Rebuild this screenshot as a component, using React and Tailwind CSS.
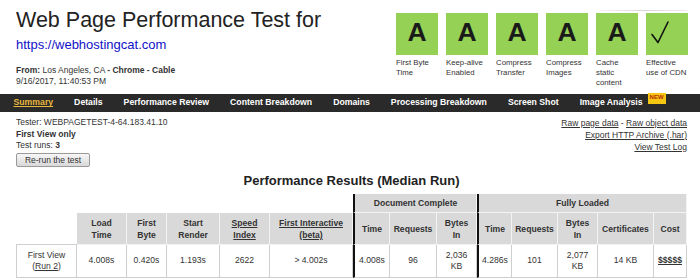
const grades = [
  { g: "A", label: ["First Byte", "Time"] },
  { g: "A", label: ["Keep-alive", "Enabled"] },
  { g: "A", label: ["Compress", "Transfer"] },
  { g: "A", label: ["Compress", "Images"] },
  { g: "A", label: ["Cache", "static", "content"] },
  { g: "check", label: ["Effective", "use of CDN"] },
];

const navItems = [
  "Summary",
  "Details",
  "Performance Review",
  "Content Breakdown",
  "Domains",
  "Processing Breakdown",
  "Screen Shot",
  "Image Analysis",
];

function GradeBox({ g }) {
  return (
    <div className="w-[42px] h-[42px] bg-[#95d155] flex items-center justify-center pb-[3px]">
      {g === "check" ? (
        <svg width="42" height="42" viewBox="0 0 42 42" className="-mb-[3px]">
          <path d="M6 21.5 L12 29.5 L22 9" fill="none" stroke="#111" strokeWidth="1.6" strokeLinecap="round" strokeLinejoin="round" />
        </svg>
      ) : (
        <span className="text-[26.5px] leading-none font-bold text-[#1a1a1a]">{g}</span>
      )}
    </div>
  );
}

function Lines({ lines, className = "" }) {
  return (
    <div className={className}>
      {lines.map((l, i) => (
        <div key={i}>{l}</div>
      ))}
    </div>
  );
}

const th = "bg-[#d9d9d9] border-r border-b border-[#f3f3f3] flex items-center justify-center text-center font-bold leading-[12px]";
const td = "border-r border-b border-[#cfcfcf] flex items-center justify-center text-center leading-[11.5px]";
const thick = "border-l-2 border-l-[#111]";

export default function App() {
  return (
    <div className="w-[700px] h-[280px] overflow-hidden bg-white text-[#333] font-['Liberation_Sans',Arial,sans-serif]">
      {/* header */}
      <div className="flex h-[94px]">
        <div className="w-[396px] pl-4">
          <h1 className="mt-[7.5px] text-[21.5px] leading-[24px] text-[#222]">Web Page Performance Test for</h1>
          <div className="mt-[5px] text-[13px] leading-[15px] text-[#1010c8]">https://webhostingcat.com</div>
          <div className="mt-[13px] text-[8.5px] leading-[11px]">
            <div>
              <b>From:</b> Los Angeles, CA <b>- Chrome - Cable</b>
            </div>
            <div>9/16/2017, 11:40:53 PM</div>
          </div>
        </div>
        <div>
          <div className="mt-[10px] ml-[204px] w-[87px] h-px bg-gradient-to-r from-[#f4f4f4] via-[#d6d6d6] to-[#ececec]" />
          <div className="mt-[2px] flex gap-[8px]">
            {grades.map((x, i) => (
              <div key={i} className="w-[42px]">
                <GradeBox g={x.g} />
                <Lines lines={x.label} className="mt-[3px] text-[7.8px] leading-[10px] text-[#333] whitespace-nowrap" />
              </div>
            ))}
          </div>
        </div>
      </div>

      {/* nav */}
      <div className="h-[18px] bg-[#2a2a2a] flex items-center pl-[13.5px] gap-[21px] text-[8.7px] font-bold text-white">
        {navItems.map((n) =>
          n === "Summary" ? (
            <span key={n} className="text-[#e8b73c] underline">{n}</span>
          ) : n === "Image Analysis" ? (
            <span key={n} className="flex items-center">
              {n}
              <span className="ml-[5px] self-start mt-[-3px] h-[11px] px-[2px] bg-[#f6c712] text-[#b8290d] text-[6px] leading-[9px]">NEW</span>
            </span>
          ) : (
            <span key={n}>{n}</span>
          )
        )}
      </div>

      {/* test info */}
      <div className="h-[55px] flex justify-between pl-4 pr-[13px] text-[8.5px]">
        <div className="mt-[5.4px] leading-[11.3px]">
          <div>Tester: WEBPAGETEST-4-64.183.41.10</div>
          <div className="font-bold">First View only</div>
          <div>
            Test runs: <b>3</b>
          </div>
          <button className="mt-[2px] h-[14px] w-[74px] border border-[#9a9a9a] rounded-[2px] bg-gradient-to-b from-[#f7f7f7] to-[#d9d9d9] text-[8.5px] leading-[12px] text-[#333]">
            Re-run the test
          </button>
        </div>
        <div className="mt-[4.6px] leading-[12px] text-right">
          <div>
            <span className="underline">Raw page data</span> - <span className="underline">Raw object data</span>
          </div>
          <div className="underline">Export HTTP Archive (.har)</div>
          <div className="underline">View Test Log</div>
        </div>
      </div>

      {/* results */}
      <h2 className="mt-[6px] pl-4 pr-[13px] text-center text-[13px] leading-[15px] font-bold text-[#222]">
        Performance Results (Median Run)
      </h2>

      <div className="mt-[6px] ml-4 grid grid-cols-[61px_50px_40px_53px_50px_83px_37px_47px_40px_35px_46px_40px_56px_33px] grid-rows-[19px_32px_33px] text-[8.6px]">
        {/* row 1 */}
        <div className="col-span-6" />
        <div className={`${th} col-span-3 ${thick}`}>Document Complete</div>
        <div className={`${th} col-span-5 ${thick}`}>Fully Loaded</div>

        {/* row 2 */}
        <div className="border-b border-[#cfcfcf]" />
        <div className={th}><Lines lines={["Load", "Time"]} /></div>
        <div className={th}><Lines lines={["First", "Byte"]} /></div>
        <div className={th}><Lines lines={["Start", "Render"]} /></div>
        <div className={`${th} underline`}><Lines lines={["Speed", "Index"]} /></div>
        <div className={`${th} underline`}><Lines lines={["First Interactive", "(beta)"]} /></div>
        <div className={`${th} ${thick}`}>Time</div>
        <div className={th}>Requests</div>
        <div className={th}><Lines lines={["Bytes", "In"]} /></div>
        <div className={`${th} ${thick}`}>Time</div>
        <div className={th}>Requests</div>
        <div className={th}><Lines lines={["Bytes", "In"]} /></div>
        <div className={th}>Certificates</div>
        <div className={th}>Cost</div>

        {/* row 3 */}
        <div className={`${td} border-l`}>
          <div>
            <div>First View</div>
            <div>
              (<span className="underline">Run 2</span>)
            </div>
          </div>
        </div>
        <div className={td}>4.008s</div>
        <div className={td}>0.420s</div>
        <div className={td}>1.193s</div>
        <div className={td}>2622</div>
        <div className={td}>&gt; 4.002s</div>
        <div className={`${td} ${thick}`}>4.008s</div>
        <div className={td}>96</div>
        <div className={td}><Lines lines={["2,036", "KB"]} /></div>
        <div className={`${td} ${thick}`}>4.286s</div>
        <div className={td}>101</div>
        <div className={td}><Lines lines={["2,077", "KB"]} /></div>
        <div className={td}>14 KB</div>
        <div className={`${td} font-bold underline`}>$$$$$</div>
      </div>
    </div>
  );
}
